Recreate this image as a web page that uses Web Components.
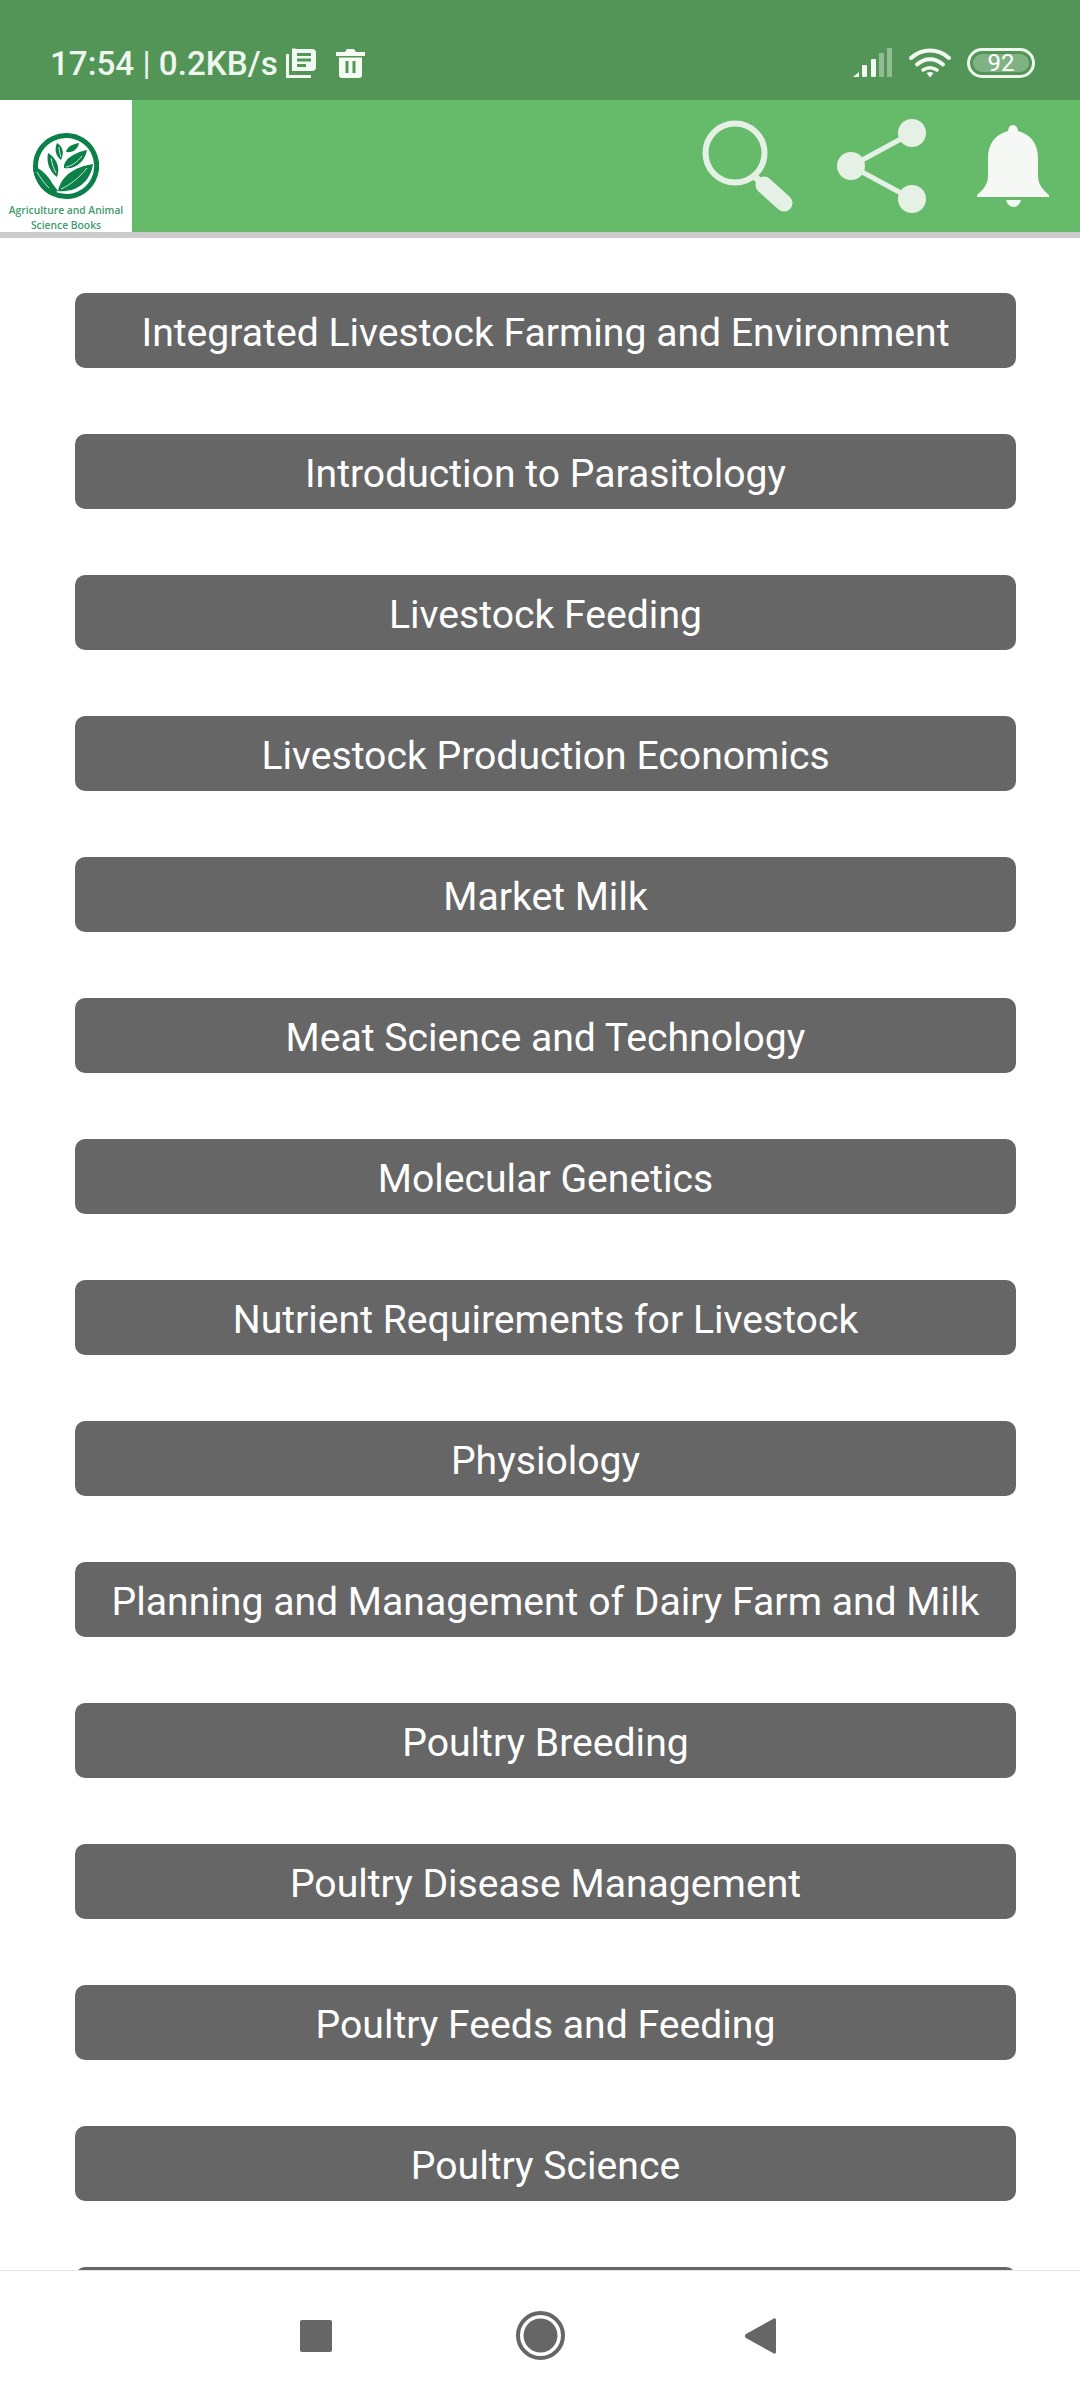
<!DOCTYPE html>
<html>
<head>
<meta charset="utf-8">
<title>Agriculture and Animal Science Books</title>
<style>
  html, body { margin: 0; padding: 0; background: #fff; }
  body { width: 1080px; height: 2400px; font-family: Roboto, "Liberation Sans", sans-serif; }
  #app { display: flex; flex-direction: column; height: 2400px; overflow: hidden; }
</style>
</head>
<body>
<div id="app">
  <status-bar time="17:54" speed="0.2KB/s" battery="92"></status-bar>
  <app-header></app-header>
  <book-list>
    <book-button text="Integrated Livestock Farming and Environment"></book-button>
    <book-button text="Introduction to Parasitology"></book-button>
    <book-button text="Livestock Feeding"></book-button>
    <book-button text="Livestock Production Economics"></book-button>
    <book-button text="Market Milk"></book-button>
    <book-button text="Meat Science and Technology"></book-button>
    <book-button text="Molecular Genetics"></book-button>
    <book-button text="Nutrient Requirements for Livestock"></book-button>
    <book-button text="Physiology"></book-button>
    <book-button text="Planning and Management of Dairy Farm and Milk"></book-button>
    <book-button text="Poultry Breeding"></book-button>
    <book-button text="Poultry Disease Management"></book-button>
    <book-button text="Poultry Feeds and Feeding"></book-button>
    <book-button text="Poultry Science"></book-button>
    <book-button text=""></book-button>
  </book-list>
  <nav-bar></nav-bar>
</div>

<script>
class StatusBar extends HTMLElement {
  constructor() {
    super();
    this.attachShadow({ mode: "open" });
  }

  connectedCallback() {
    const time = this.getAttribute("time");
    const speed = this.getAttribute("speed");
    const battery = this.getAttribute("battery");
    this.shadowRoot.innerHTML = `
      <style>
        :host {
          display: flex;
          align-items: center;
          flex: none;
          height: 100px;
          padding: 26px 45px 0 50px;
          box-sizing: border-box;
          background: #529557;
          color: #eef6ee;
          font-family: Roboto, sans-serif;
        }
        .clock { font-size: 33.200px; font-weight: 500; white-space: nowrap; width: 227px; }
        .sep { font-weight: 400; }
        svg { display: block; flex: none; }
        .news { margin-left: 9px; }
        .trash { margin-left: 20px; }
        .spacer { flex: 1; }
        .wifi { margin-left: 16px; }
        .battery {
          margin-left: 16px;
          width: 68px;
          height: 30px;
          box-sizing: border-box;
          border: 3px solid #eef6ee;
          border-radius: 15px;
          padding: 3px;
          display: flex;
        }
        .level {
          width: 100%;
          border-radius: 9px;
          background: rgba(238, 246, 238, .3);
          font-size: 24px;
          line-height: 18px;
          text-align: center;
          color: #fff;
        }
      </style>
      <span class="clock">${time} <span class="sep">|</span> ${speed}</span>
      <svg class="news" width="30" height="30" viewBox="0 0 30 30" fill="none" stroke="#f2f8f2" stroke-width="3">
        <path d="M1.500 6v22.500H25"/>
        <path d="M6 .5h2c2 0 3 1 3 .5h15a4 4 0 0 1 4 4v14a4 4 0 0 1-4 4H6z" fill="#f2f8f2" stroke="none"/>
        <path d="M11 6.500h14M11 12h14M11 17.500h9" stroke="#529557"/>
      </svg>
      <svg class="trash" width="29" height="30" viewBox="0 0 29 30" fill="#f5faf5">
        <path d="M0 4h9l2-3h7l2 3h9v4H0z"/>
        <path d="M3 9.500h23V27a3 3 0 0 1-3 3H6a3 3 0 0 1-3-3z"/>
        <rect x="9.500" y="13" width="3" height="12" fill="#529557"/>
        <rect x="16.500" y="13" width="3" height="12" fill="#529557"/>
      </svg>
      <span class="spacer"></span>
      <svg width="40" height="30" viewBox="0 0 40 30" fill="#f2f8f2">
        <path d="M0 29l6-5v5z"/>
        <rect x="9" y="17" width="5" height="12" rx="1"/>
        <rect x="18" y="11" width="5" height="18" rx="1"/>
        <rect x="26" y="5" width="5" height="24" opacity=".4"/>
        <rect x="34" y="0" width="5" height="29" opacity=".4"/>
      </svg>
      <svg class="wifi" width="42" height="30" viewBox="0 0 42 30" fill="none" stroke="#f2f8f2" stroke-width="4" stroke-linecap="round">
        <path d="M2 10c11-10 27-10 38 0"/>
        <path d="M8 16.500c8-7 18-7 26 0"/>
        <path d="M14 22c4.500-3 9.500-3 14 0" stroke-width="3.500"/>
        <path d="M17.500 25L21 29.500 24.500 25c-2-1.500-5-1.500-7 0z" fill="#f2f8f2" stroke="none"/>
      </svg>
      <div class="battery"><div class="level">${battery}</div></div>
    `;
  }
}

class AppHeader extends HTMLElement {
  constructor() {
    super();
    this.attachShadow({ mode: "open" });
  }

  connectedCallback() {
    this.shadowRoot.innerHTML = `
      <style>
        :host {
          display: flex;
          flex: none;
          height: 138px;
          box-sizing: border-box;
          background: #66bb6a;
          border-bottom: 6px solid #cccccc;
        }
        .logo {
          flex: none;
          width: 132px;
          background: #fff;
          display: flex;
          flex-direction: column;
          align-items: center;
          padding-top: 33px;
          box-sizing: border-box;
          color: #3f9b6d;
          font-family: "Open Sans", sans-serif;
          font-size: 10.300px;
          font-weight: 600;
          line-height: 14.500px;
          text-align: center;
          white-space: nowrap;
        }
        .logo svg { display: block; margin-bottom: 4px; }
        .actions {
          flex: 1;
          display: flex;
          justify-content: flex-end;
          padding: 18px 30px 0 0;
        }
        .actions svg { display: block; }
        .share { margin-left: 42px; }
        .bell { margin-left: 48px; }
      </style>
      <div class="logo">
        <svg width="66" height="66" viewBox="0 0 66 66" fill="#0b8049">
          <path d="M20 5.500A30.500 30.500 0 1 1 20 60.500 30.500 30.500 0 0 1 2.500 33 30.500 30.500 0 0 1 20 5.500z" fill="none" stroke="#0b8049" stroke-width="5"/>
          <path d="M33 19c1-5 6-8 13-9-1 6-6 10-13 9z"/>
          <path d="M24 10c5 3 8 9 4 17-5-4-7-10-4-17z"/>
          <path d="M15 20c7 4 13 13 9 24-7-5-11-14-9-24z"/>
          <path d="M31 35c-1-8 9-15 23-18-2 11-11 20-23 18z"/>
          <path d="M25 58c3-15 16-24 35-27-2 15-14 29-35 27z"/>
          <path d="M0 33c8 3 15 9 19 17l6 8-4 2C9 55 0 46 0 33z"/>
          <path d="M28 56c9-4 18-11 26-21M33 34c6-1 11-5 16-11M4 39c4 7 8 12 12 16M18 25c1 6 3 11 5 15M26 14c0 3 1 7 2 10" fill="none" stroke="#fff" stroke-width=".8"/>
        </svg>
        <span>Agriculture and Animal</span>
        <span>Science Books</span>
      </div>
      <div class="actions">
        <svg width="92" height="96" viewBox="0 0 92 96" fill="none" stroke="#e4f1e4">
          <circle cx="33" cy="35" r="29.500" stroke-width="6"/>
          <path d="M52 58l9 8" stroke-width="7"/>
          <path d="M62 67l20 18" stroke-width="17" stroke-linecap="round"/>
        </svg>
        <svg class="share" width="92" height="96" viewBox="0 0 92 96" fill="#e4f1e4" stroke="#e4f1e4">
          <path d="M76 15L15 48l61 33" fill="none" stroke-width="5"/>
          <circle cx="76" cy="15" r="14" stroke="none"/>
          <circle cx="15" cy="48" r="14" stroke="none"/>
          <circle cx="76" cy="81" r="14" stroke="none"/>
        </svg>
        <svg class="bell" width="74" height="92" viewBox="0 0 74 92" fill="#f5f8f5">
          <path d="M37 7c3 0 4.500 2 5 6 12 3 20 12 20 27v18c0 8 5 14 11 19v2H1v-2c6-5 11-11 11-19V40c0-15 8-24 20-27 .5-4 2-6 5-6z"/>
          <path d="M30 82h15c-1 4-4 7-7.500 7s-6.500-3-7.500-7z"/>
        </svg>
      </div>
    `;
  }
}

class BookList extends HTMLElement {
  constructor() {
    super();
    this.attachShadow({ mode: "open" });
  }

  connectedCallback() {
    this.shadowRoot.innerHTML = `
      <style>
        :host {
          display: flex;
          flex-direction: column;
          flex: 1;
          min-height: 0;
          overflow: hidden;
          gap: 66px;
          padding: 55px 64px 0 75px;
          background: #fff;
        }
      </style>
      <slot></slot>
    `;
  }
}

class BookButton extends HTMLElement {
  constructor() {
    super();
    this.attachShadow({ mode: "open" });
  }

  connectedCallback() {
    this.shadowRoot.innerHTML = `
      <style>
        :host {
          display: block;
          flex: none;
          height: 75px;
          box-sizing: border-box;
          padding-top: 3px;
          border-radius: 10px;
          background: #666666;
          color: #fff;
          font-family: Roboto, sans-serif;
          font-size: 39.150px;
          line-height: 75px;
          text-align: center;
          white-space: nowrap;
        }
      </style>
      ${this.getAttribute("text")}
    `;
  }
}

class NavBar extends HTMLElement {
  constructor() {
    super();
    this.attachShadow({ mode: "open" });
  }

  connectedCallback() {
    this.shadowRoot.innerHTML = `
      <style>
        :host {
          display: flex;
          align-items: center;
          flex: none;
          height: 130px;
          box-sizing: border-box;
          border-top: 1px solid #e6e6e6;
          background: #fff;
          padding: 0 0 0 300px;
          position: relative;
          z-index: 1;
        }
        svg { display: block; }
        .home { margin-left: 184px; }
        .back { margin-left: 180px; }
      </style>
      <svg width="32" height="32" viewBox="0 0 32 32"><rect width="32" height="32" rx="2" fill="#666"/></svg>
      <svg class="home" width="49" height="49" viewBox="0 0 49 49">
        <circle cx="24.500" cy="24.500" r="22.500" fill="none" stroke="#666" stroke-width="4"/>
        <circle cx="24.500" cy="24.500" r="17" fill="#666"/>
      </svg>
      <svg class="back" width="31" height="36" viewBox="0 0 31 36"><path d="M31 2v32c0 2-2 2-3 1L1 20c-1.500-1-1.500-3 0-4L28 1c1-1 3-1 3 1z" fill="#666"/></svg>
    `;
  }
}

customElements.define("status-bar", StatusBar);
customElements.define("app-header", AppHeader);
customElements.define("book-list", BookList);
customElements.define("book-button", BookButton);
customElements.define("nav-bar", NavBar);
</script>
</body>
</html>
